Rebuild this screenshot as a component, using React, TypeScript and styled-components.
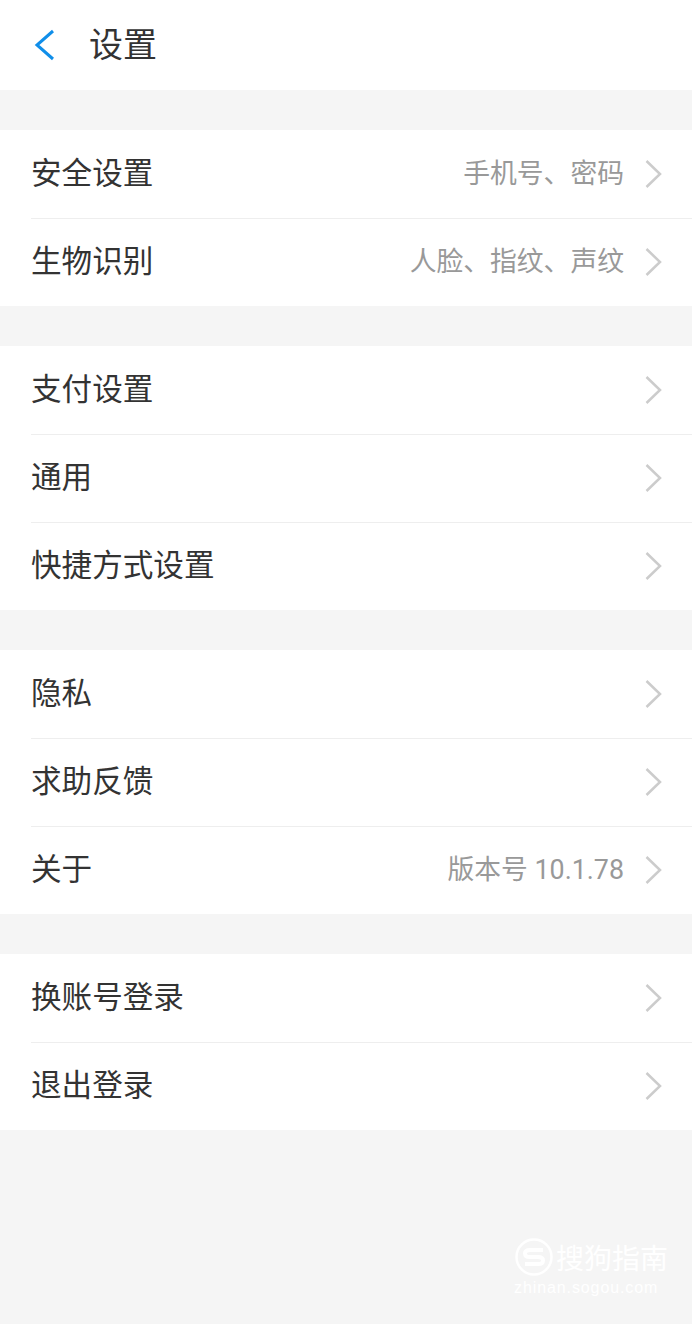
import React from "react";
import styled, { createGlobalStyle } from "styled-components";

const Global = createGlobalStyle`
  * { box-sizing: border-box; }
  body { margin: 0; background: #f5f5f5; }
`;

const Screen = styled.main`
  display: flex;
  flex-direction: column;
  gap: 40px;
  width: 692px;
  height: 1324px;
  overflow: hidden;
  background: #f5f5f5;
  font-family: Roboto, "Noto Sans CJK SC", sans-serif;
  color: #333;
`;

const Header = styled.header`
  display: flex;
  align-items: center;
  gap: 34px;
  height: 89.5px;
  padding-left: 34px;
  background: #fff;
`;

const Title = styled.h1`
  margin: 0;
  font-size: 34px;
  font-weight: 400;
  line-height: 50px;
`;

const Group = styled.section`
  background: #fff;
`;

const Row = styled.div`
  display: flex;
  align-items: center;
  height: 88px;
  margin-left: 31px;
  padding-right: 30px;
  & + & { border-top: 1px solid #eee; }
`;

const Label = styled.span`
  flex: 1;
  font-size: 30.6px;
  line-height: 44px;
`;

const Detail = styled.span`
  margin-right: 21px;
  font-size: 26.8px;
  line-height: 40px;
  color: #999;
`;

const Watermark = styled.footer`
  position: absolute;
  left: 514px;
  top: 1236px;
  width: 156px;
  color: #fff;
`;

const Brand = styled.div`
  display: flex;
  align-items: center;
  gap: 2px;
  height: 42px;
  font-size: 28px;
`;

const Site = styled.div`
  font: 16px/20px "Liberation Sans", sans-serif;
  letter-spacing: 0.9px;
`;

const Chevron = () => (
  <svg width="17" height="30" viewBox="0 0 17 30" fill="none" stroke="#ccc" strokeWidth="2.5">
    <path d="M1.5 2 15 15 1.5 28" />
  </svg>
);

const groups = [
  [["安全设置", "手机号、密码"], ["生物识别", "人脸、指纹、声纹"]],
  [["支付设置"], ["通用"], ["快捷方式设置"]],
  [["隐私"], ["求助反馈"], ["关于", "版本号 10.1.78"]],
  [["换账号登录"], ["退出登录"]],
];

export default function App() {
  return (
    <Screen>
      <Global />
      <Header>
        <svg width="21" height="32" viewBox="0 0 21 32" fill="none" stroke="#108ee9" strokeWidth="3">
          <path d="M19 2 3 16 19 30" />
        </svg>
        <Title>设置</Title>
      </Header>
      {groups.map((rows, i) => (
        <Group key={i}>
          {rows.map(([label, detail]) => (
            <Row key={label}>
              <Label>{label}</Label>
              {detail && <Detail>{detail}</Detail>}
              <Chevron />
            </Row>
          ))}
        </Group>
      ))}
      <Watermark>
        <Brand>
          <svg width="40" height="40" viewBox="0 0 40 40" fill="none" stroke="#fff" strokeWidth="2.5">
            <circle cx="20" cy="20" r="17.5" />
            <path d="M29 13H16q-5 0-5 3.500t5 3.500h8q5 0 5 3.500t-5 3.500H11" strokeWidth="4" />
          </svg>
          搜狗指南
        </Brand>
        <Site>zhinan.sogou.com</Site>
      </Watermark>
    </Screen>
  );
}
